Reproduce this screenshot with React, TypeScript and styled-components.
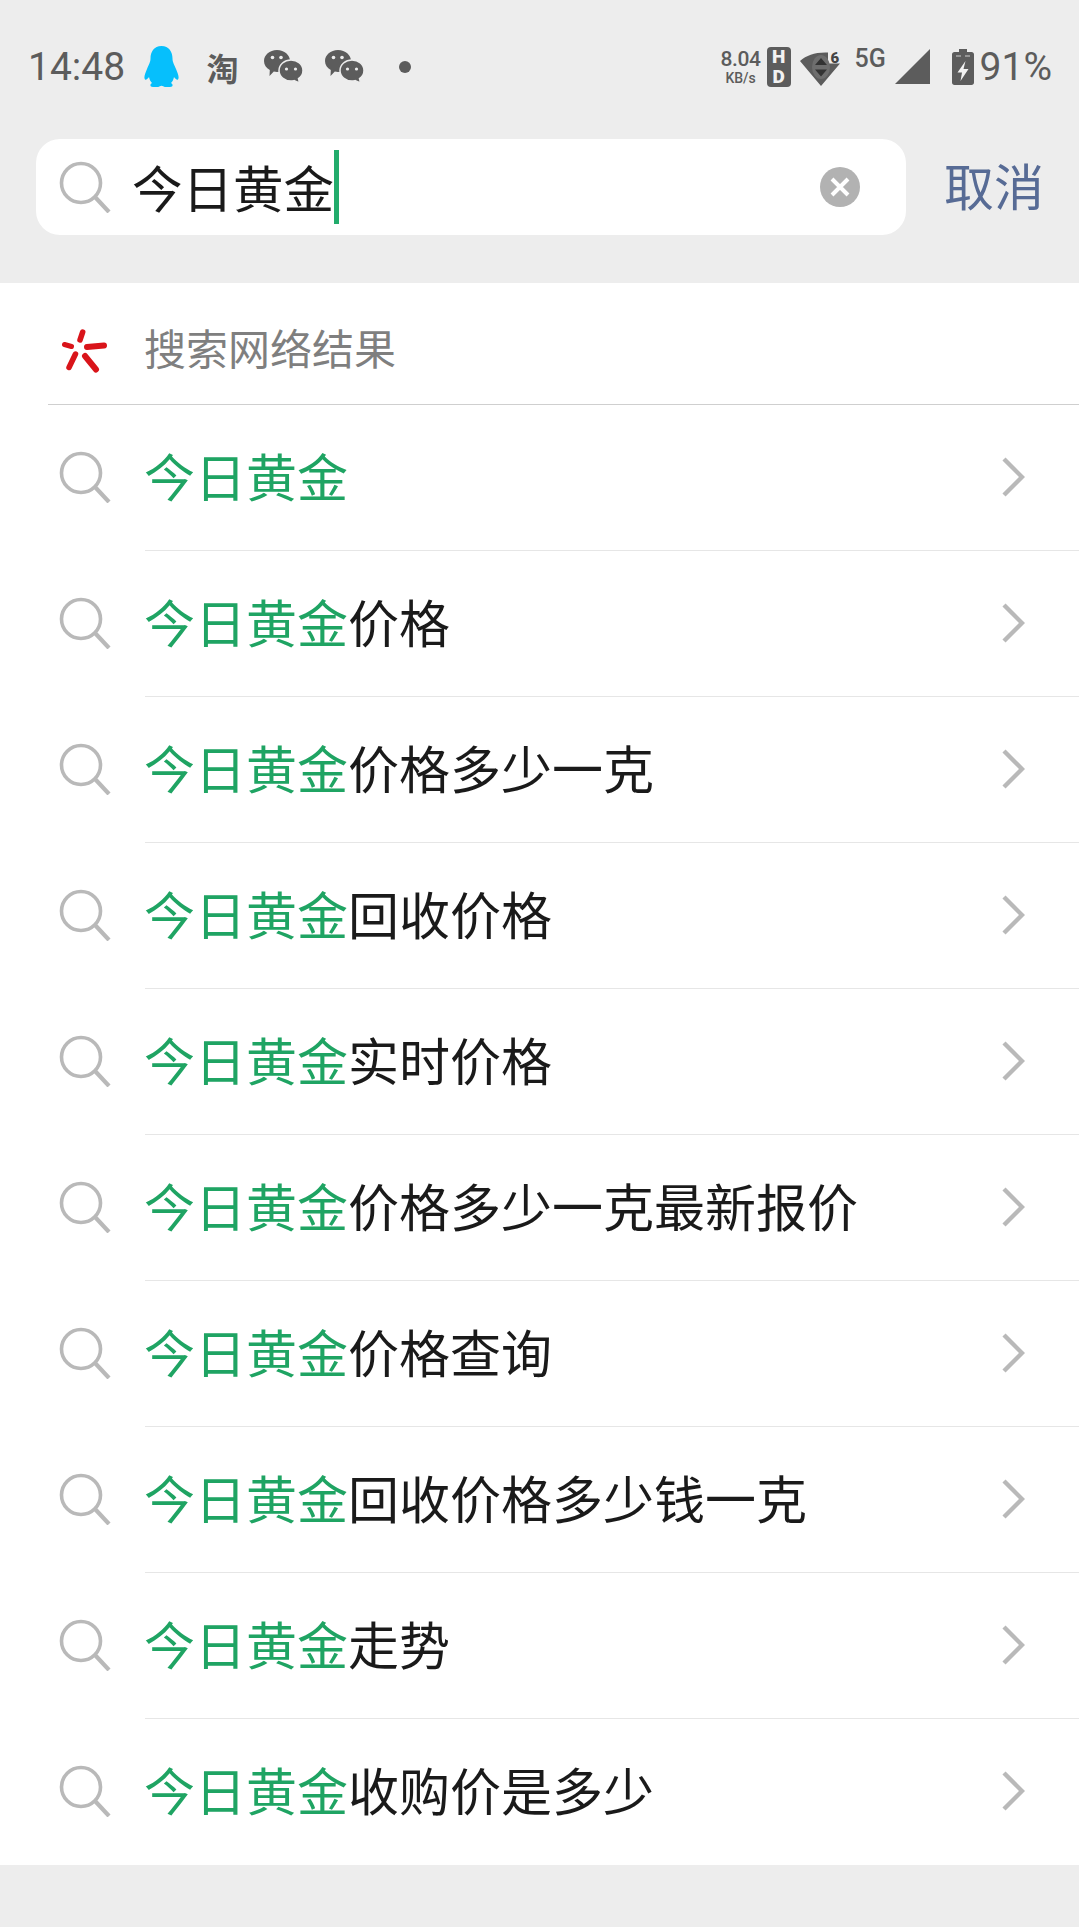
import React from "react";
import styled, { createGlobalStyle } from "styled-components";

const GlobalStyle = createGlobalStyle`
  html, body {
    margin: 0;
    padding: 0;
    background: #ededed;
  }
  * {
    box-sizing: border-box;
  }
`;

const Page = styled.div`
  width: 1079px;
  height: 1927px;
  overflow: hidden;
  background: #ededed;
  font-family: "Noto Sans CJK SC", "Noto Sans", sans-serif;
`;

const StatusBar = styled.div`
  height: 139px;
  padding: 0 27px 6px 28px;
  display: flex;
  align-items: center;
  justify-content: space-between;
  color: #5c5c5c;
  font-family: Roboto, "Noto Sans CJK SC", sans-serif;
`;

const StatusGroup = styled.div`
  display: flex;
  align-items: center;
`;

const StatusText = styled.span<{ $left?: number }>`
  font-size: 39px;
  line-height: 44px;
  margin-left: ${(p) => p.$left ?? 0}px;
`;

const StatusIcon = styled.svg<{ $left: number }>`
  display: block;
  flex: none;
  margin-left: ${(p) => p.$left}px;
`;

const TaoGlyph = styled.span`
  margin-left: 27px;
  width: 33px;
  font-family: "Noto Sans CJK SC", sans-serif;
  font-size: 32px;
  font-weight: 700;
  line-height: 48px;
  text-align: center;
`;

const Dot = styled.i`
  display: block;
  width: 12px;
  height: 12px;
  margin-left: 35px;
  border-radius: 50%;
  background: #5c5c5c;
`;

const Speed = styled.div`
  width: 44px;
  margin-right: 1px;
  display: flex;
  flex-direction: column;
  align-items: center;
  font-size: 21px;
  font-weight: 500;
  line-height: 22px;
  letter-spacing: -0.4px;
  small {
    font-size: 14px;
    font-weight: 500;
    line-height: 16px;
    letter-spacing: 0;
  }
`;

const HdBadge = styled.div`
  width: 24px;
  height: 40px;
  margin-left: 3px;
  border-radius: 4px;
  background: #5c5c5c;
  color: #f2f2f2;
  display: flex;
  flex-direction: column;
  align-items: center;
  justify-content: center;
  font-size: 19px;
  font-weight: 900;
  line-height: 20px;
`;

const FiveG = styled.span`
  margin-left: 13px;
  margin-bottom: 15px;
  width: 32px;
  font-size: 25px;
  font-weight: 500;
  line-height: 24px;
`;

const SearchBar = styled.div`
  height: 144px;
  padding: 0 35px 48px 36px;
  display: flex;
  align-items: center;
`;

const SearchField = styled.div`
  flex: 1;
  height: 96px;
  padding: 0 46px 0 23px;
  display: flex;
  align-items: center;
  border-radius: 24px;
  background: #fff;
`;

const FieldText = styled.span`
  margin-left: 21px;
  padding-bottom: 3px;
  font-size: 50.5px;
  line-height: 70px;
  color: #1a1a1a;
`;

const Caret = styled.i`
  display: block;
  width: 5px;
  height: 74px;
  background: #22ac6c;
`;

const Spacer = styled.div`
  flex: 1;
`;

const CancelLabel = styled.span`
  margin-left: 38px;
  padding-bottom: 7px;
  font-size: 50px;
  line-height: 70px;
  color: #576b95;
`;

const Results = styled.div`
  background: #fff;
`;

const ResultsHeader = styled.div`
  height: 122px;
  margin-left: 48px;
  padding-left: 12px;
  display: flex;
  align-items: center;
  border-bottom: 1px solid #cfcfcf;
`;

const HeaderMark = styled.svg`
  display: block;
  flex: none;
  margin-top: 14px;
`;

const HeaderLabel = styled.span`
  margin-left: 34px;
  padding-top: 7px;
  font-size: 42px;
  line-height: 60px;
  color: #7f7f7f;
`;

const Row = styled.div`
  height: 146px;
  display: flex;
  align-items: stretch;
`;

const RowIcon = styled.div`
  width: 145px;
  flex: none;
  padding: 0 0 2px 59px;
  display: flex;
  align-items: center;
`;

const RowBody = styled.div<{ $last: boolean }>`
  flex: 1;
  padding: 0 54px 2px 0;
  display: flex;
  align-items: center;
  justify-content: space-between;
  border-bottom: ${(p) => (p.$last ? "none" : "1px solid #e6e6e6")};
`;

const RowText = styled.span`
  margin-left: -1px;
  padding-bottom: 4px;
  font-size: 51px;
  line-height: 70px;
  color: #1a1a1a;
  white-space: nowrap;
  em {
    font-style: normal;
    color: #1fa463;
  }
`;

const SearchIcon = () => (
  <svg width="52" height="52" viewBox="0 0 52 52" fill="none" stroke="#b9b9b9" strokeWidth="3.6">
    <circle cx="22" cy="22" r="19.5" />
    <path d="M36 36 L50 51" strokeWidth="4.2" />
  </svg>
);

const Chevron = () => (
  <svg width="24" height="40" viewBox="0 0 24 40" fill="none" stroke="#b9b9b9" strokeWidth="4.4">
    <path d="M3 2 L21 20 L3 38" />
  </svg>
);

const Penguin = () => (
  <StatusIcon $left={19} width="35" height="41" viewBox="0 0 35 41">
    <path
      fill="#06bffc"
      d="M17.5 0 C25 0 28.5 6 28.5 12.5 C28.5 16 30 18 32 23 C34 27.5 35.5 32 34 33.5 C33 34.3 31 32.5 30 31 C29.5 33.5 28.5 35.5 27 37 C29 38 29.5 41 26 41 L21 41 C19.5 41 19 39.8 17.5 39.8 C16 39.8 15.5 41 14 41 L9 41 C5.5 41 6 38 8 37 C6.5 35.5 5.5 33.5 5 31 C4 32.5 2 34.3 1 33.5 C-0.5 32 1 27.5 3 23 C5 18 6.5 16 6.5 12.5 C6.5 6 10 0 17.5 0 Z"
    />
  </StatusIcon>
);

const WeChat = ({ left }: { left: number }) => (
  <StatusIcon $left={left} width="39" height="33" viewBox="0 0 39 33">
    <path fill="#5c5c5c" d="M13 0 C20.5 0 26 5 26 11 C26 17 20.5 22 13 22 C11.8 22 10.8 21.9 9.8 21.6 L5.5 26 L5.8 20 C2.2 18 0 14.8 0 11 C0 5 5.5 0 13 0 Z" />
    <path fill="#5c5c5c" stroke="#ededed" strokeWidth="1.5" d="M27 10 C33.5 10 39 14.5 39 20.5 C39 24 37.2 26.8 34.5 28.6 L35.5 33 L30 30.6 C29 30.9 28 31 27 31 C20.5 31 15 26.5 15 20.5 C15 14.5 20.5 10 27 10 Z" />
    <circle cx="8.5" cy="7.5" r="1.8" fill="#ededed" />
    <circle cx="17" cy="7.5" r="1.8" fill="#ededed" />
    <circle cx="22.5" cy="19" r="1.6" fill="#ededed" />
    <circle cx="31.5" cy="19" r="1.6" fill="#ededed" />
  </StatusIcon>
);

const WifiIcon = () => (
  <StatusIcon $left={9} width="42" height="46" viewBox="0 -7 42 46">
    <path fill="#5c5c5c" d="M0 10 C7 4 15 1 28 1.5 V12.5 H40 L21 35 Z" />
    <ellipse cx="21" cy="16" rx="9" ry="12" fill="#6e6e6e" />
    <path fill="#333" d="M21 7 L27 14 H15 Z M15 18.5 H27 L21 25.5 Z" />
    <text x="30.5" y="11.5" fontSize="15" fontWeight="900" fill="#444" fontFamily="Roboto, sans-serif">6</text>
  </StatusIcon>
);

const SignalIcon = () => (
  <StatusIcon $left={8} width="35" height="35" viewBox="0 0 35 35">
    <path fill="#5c5c5c" d="M35 0 L35 35 L0 35 Z" />
  </StatusIcon>
);

const BatteryIcon = () => (
  <StatusIcon $left={22} width="22" height="36" viewBox="0 0 22 36">
    <path fill="#5c5c5c" d="M7 0 H15 V3 H19.5 C21 3 22 4 22 5.5 V33.5 C22 35 21 36 19.5 36 H2.5 C1 36 0 35 0 33.5 V5.5 C0 4 1 3 2.5 3 H7 Z" />
    <path stroke="#a8a8a8" strokeWidth="1.4" d="M4 7 H9 M13 7 H18" />
    <path fill="#f2f2f2" d="M13.5 12 L5.5 23.5 H10 L8.5 32 L16.5 20 H11.5 Z" />
  </StatusIcon>
);

const ClearIcon = () => (
  <svg width="40" height="40" viewBox="0 0 40 40">
    <circle cx="20" cy="20" r="20" fill="#b2b2b2" />
    <path d="M12 12 L28 28 M28 12 L12 28" stroke="#fff" strokeWidth="4" />
  </svg>
);

const SogouMark = () => (
  <HeaderMark width="50" height="50" viewBox="60 325 50 50" fill="none" stroke="#d9141a" strokeLinecap="round">
    <path d="M82.7 331 L80 339" strokeWidth="5.5" />
    <path d="M87 346 L104 344.5" strokeWidth="6" />
    <path d="M85 355 L96 368.5" strokeWidth="6" />
    <path d="M75.5 353 L69 366.5" strokeWidth="5.5" />
    <path d="M64.5 343.5 L71.5 345.5" strokeWidth="5" />
  </HeaderMark>
);

const QUERY = "今日黄金";

const SUFFIXES = [
  "",
  "价格",
  "价格多少一克",
  "回收价格",
  "实时价格",
  "价格多少一克最新报价",
  "价格查询",
  "回收价格多少钱一克",
  "走势",
  "收购价是多少",
];

export default function App() {
  return (
    <Page>
      <GlobalStyle />
      <StatusBar>
        <StatusGroup>
          <StatusText>14:48</StatusText>
          <Penguin />
          <TaoGlyph>淘</TaoGlyph>
          <WeChat left={25} />
          <WeChat left={22} />
          <Dot />
        </StatusGroup>
        <StatusGroup>
          <Speed>
            8.04
            <small>KB/s</small>
          </Speed>
          <HdBadge>
            <span>H</span>
            <span>D</span>
          </HdBadge>
          <WifiIcon />
          <FiveG>5G</FiveG>
          <SignalIcon />
          <BatteryIcon />
          <StatusText $left={6}>91%</StatusText>
        </StatusGroup>
      </StatusBar>
      <SearchBar>
        <SearchField>
          <SearchIcon />
          <FieldText>{QUERY}</FieldText>
          <Caret />
          <Spacer />
          <ClearIcon />
        </SearchField>
        <CancelLabel>取消</CancelLabel>
      </SearchBar>
      <Results>
        <ResultsHeader>
          <SogouMark />
          <HeaderLabel>搜索网络结果</HeaderLabel>
        </ResultsHeader>
        {SUFFIXES.map((suffix, i) => (
          <Row key={suffix}>
            <RowIcon>
              <SearchIcon />
            </RowIcon>
            <RowBody $last={i === SUFFIXES.length - 1}>
              <RowText>
                <em>{QUERY}</em>
                {suffix}
              </RowText>
              <Chevron />
            </RowBody>
          </Row>
        ))}
      </Results>
    </Page>
  );
}
